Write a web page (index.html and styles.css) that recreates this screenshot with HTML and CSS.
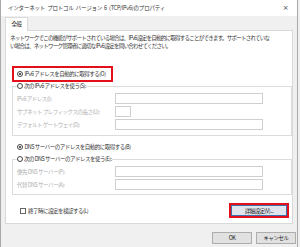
FILE: index.html
```html
<!DOCTYPE html>
<html lang="ja">
<head>
    <meta charset="UTF-8">
    <title>インターネット プロトコル バージョン 6 (TCP/IPv6)のプロパティ</title>
    <link rel="stylesheet" href="styles.css">
</head>
<body>
    <div class="window">
        <div class="titlebar">
            <span class="title">インターネット プロトコル バージョン 6 (TCP/IPv6)のプロパティ</span>
            <span class="close">×</span>
        </div>

        <div class="content">
            <div class="tabs">
                <div class="tab">全般</div>
            </div>

            <div class="panel">
                <p class="desc">ネットワークでこの機能がサポートされている場合は、IPv6 設定を自動的に取得することができます。サポートされていな<br>い場合は、ネットワーク管理者に適切な IPv6 設定を問い合わせてください。</p>

                <div class="highlight autoIp">
                    <label class="option"><span class="radio checked"></span>IPv6 アドレスを自動的に取得する(O)</label>
                </div>

                <fieldset class="group">
                    <legend class="option"><span class="radio"></span>次の IPv6 アドレスを使う(S):</legend>
                    <div class="row"><span class="fieldLabel">IPv6 アドレス(I):</span><span class="inputBox"></span></div>
                    <div class="row"><span class="fieldLabel">サブネット プレフィックスの長さ(U):</span><span class="inputBox short"></span></div>
                    <div class="row"><span class="fieldLabel">デフォルト ゲートウェイ(D):</span><span class="inputBox"></span></div>
                </fieldset>

                <label class="option dnsAuto"><span class="radio checked"></span>DNS サーバーのアドレスを自動的に取得する(B)</label>

                <fieldset class="group dnsGroup">
                    <legend class="option"><span class="radio"></span>次の DNS サーバーのアドレスを使う(E):</legend>
                    <div class="row"><span class="fieldLabel">優先 DNS サーバー(P):</span><span class="inputBox"></span></div>
                    <div class="row"><span class="fieldLabel">代替 DNS サーバー(A):</span><span class="inputBox"></span></div>
                </fieldset>

                <div class="panelFooter">
                    <label class="checkOption"><span class="checkbox"></span>終了時に設定を検証する(L)</label>
                    <div class="highlight advanced">
                        <button type="button" class="btn focused">詳細設定(V)...</button>
                    </div>
                </div>
            </div>

            <div class="dialogButtons">
                <button type="button" class="btn">OK</button>
                <button type="button" class="btn">キャンセル</button>
            </div>
        </div>
    </div>
</body>
</html>
```

FILE: styles.css
```css
/* styles.css */
body {
    margin: 0;
    padding: 0;
    background-color: #f0f0f0;
    font-family: "Noto Sans CJK JP", "Noto Sans", sans-serif;
    font-size: 5.5px;
    letter-spacing: -0.5px;
    color: #222;
}

.window {
    width: 296px;
    height: 247px;
    border-left: 1px solid #a9a9a9;
    border-right: 1px solid #a9a9a9;
    background-color: #f0f0f0;
    overflow: hidden;
}

.titlebar {
    height: 16px;
    background-color: #fff;
    display: flex;
    align-items: center;
    justify-content: space-between;
    padding: 0 9px 0 7px;
}

.title {
    letter-spacing: -0.2px;
    word-spacing: 1px;
    color: #333;
}

.close {
    font-family: "DejaVu Sans", sans-serif;
    font-size: 7px;
    color: #444;
}

.content {
    padding: 1px 0 0 4px;
}

.tabs {
    display: flex;
    height: 14px;
}

.tab {
    width: 21px;
    background-color: #fff;
    border: 1px solid #d9d9d9;
    border-bottom: none;
    text-align: center;
    line-height: 13px;
    position: relative;
    z-index: 1;
}

.panel {
    width: 286px;
    height: 192px;
    margin-top: -1px;
    background-color: #fff;
    border: 1px solid #d9d9d9;
}

.desc {
    margin: 0;
    padding: 3px 0 0 4px;
    line-height: 8px;
    white-space: nowrap;
    letter-spacing: -0.75px;
    color: #333;
}

.highlight {
    border: 2px solid #e3101c;
    box-sizing: border-box;
}

.autoIp {
    width: 101px;
    height: 16px;
    margin: 16px 0 0 6px;
    padding-left: 3px;
    display: flex;
    align-items: center;
}

.option {
    display: flex;
    align-items: center;
    line-height: 8px;
    color: #333;
}

.radio {
    width: 4px;
    height: 4px;
    border: 1px solid #444;
    border-radius: 50%;
    margin-right: 1.5px;
    position: relative;
    flex: none;
}

.radio.checked::after {
    content: "";
    position: absolute;
    left: 1px;
    top: 1px;
    width: 2px;
    height: 2px;
    border-radius: 50%;
    background-color: #222;
}

.group {
    width: 274px;
    margin: 0 0 0 6px;
    padding: 2px 0 4px 4px;
    border: 1px solid #dcdcdc;
    min-inline-size: 0;
}

.group legend {
    padding: 0 1px 0 0;
    margin-left: -0.5px;
}

.row {
    display: flex;
    align-items: center;
    height: 13px;
}

.fieldLabel {
    width: 98px;
    color: #b0b0b0;
    white-space: nowrap;
}

.inputBox {
    width: 146px;
    height: 9px;
    border: 1px solid #cfcfcf;
    background-color: #fff;
}

.inputBox.short {
    width: 14px;
}

.dnsAuto {
    margin: 6px 0 0 11px;
    height: 9px;
}

.dnsGroup {
    margin-top: 4px;
    padding-top: 2px;
    padding-bottom: 3px;
}

.panelFooter {
    display: flex;
    align-items: center;
    justify-content: space-between;
    margin: 8px 3px 0 14px;
}

.checkOption {
    display: flex;
    align-items: center;
    color: #333;
}

.checkbox {
    width: 4px;
    height: 4px;
    border: 1px solid #666;
    margin-right: 2px;
}

.advanced {
    width: 60px;
    height: 15px;
    display: flex;
}

.btn {
    font-family: inherit;
    font-size: 5.5px;
    letter-spacing: -0.5px;
    color: #222;
    background-color: #e1e1e1;
    border: 1px solid #adadad;
    padding: 0;
    margin: 0;
    width: 40px;
    height: 12px;
    line-height: 10px;
}

.btn.focused {
    width: 100%;
    height: 100%;
    border-color: #3d6fa8;
    background-color: #e1e6ee;
}

.dialogButtons {
    display: flex;
    justify-content: flex-end;
    gap: 4px;
    margin: 8px 1px 0 0;
}
```
